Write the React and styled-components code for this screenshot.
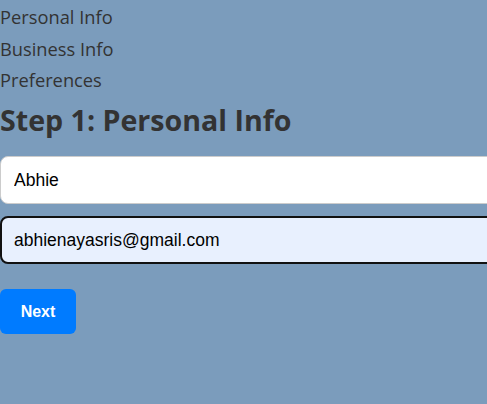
import React from "react";
import styled, { createGlobalStyle } from "styled-components";

const Global = createGlobalStyle`
  html, body { margin: 0; padding: 0; background: #7b9cbc; }
  body { overflow: hidden; }
  * { box-sizing: border-box; }
`;

const Page = styled.div`
  width: 487px;
  height: 404px;
  overflow: hidden;
  background: #7b9cbc;
  font-family: "Open Sans", "Noto Sans", sans-serif;
  color: #333;
`;

const NavList = styled.ul`
  list-style: none;
  margin: 0;
  padding: 0;
`;

const NavItem = styled.li`
  font-size: 18.3px;
  line-height: 31.7px;
  height: 31.7px;
  padding-top: 1px;
`;

const Heading = styled.h2`
  margin: 4px 0 0;
  font-size: 28.6px;
  font-weight: 700;
  line-height: 42px;
  padding-bottom: 2px;
`;

const Form = styled.form`
  display: flex;
  flex-direction: column;
  gap: 12px;
  margin-top: 13px;
  width: 540px;
`;

const Input = styled.input`
  width: 100%;
  height: 48px;
  padding: 0 13px;
  font-family: "Liberation Sans", Arial, sans-serif;
  font-size: 17.5px;
  color: #000;
  border-radius: 8px;
  border: ${(p) => (p.$focused ? "2px solid #111" : "1px solid #ccc")};
  background: ${(p) => (p.$focused ? "#e8f0fe" : "#fff")};
  outline: none;
  padding-left: ${(p) => (p.$focused ? "12px" : "13px")};
`;

const Button = styled.button`
  margin-top: 13px;
  align-self: flex-start;
  width: 76px;
  height: 45px;
  border: none;
  border-radius: 6px;
  background: #007bff;
  color: #fff;
  font-family: "Liberation Sans", Arial, sans-serif;
  font-size: 16px;
  font-weight: 700;
  cursor: pointer;
`;

export default function App() {
  return (
    <Page>
      <Global />
      <NavList>
        <NavItem>Personal Info</NavItem>
        <NavItem>Business Info</NavItem>
        <NavItem>Preferences</NavItem>
      </NavList>
      <Heading>Step 1: Personal Info</Heading>
      <Form onSubmit={(e) => e.preventDefault()}>
        <Input defaultValue="Abhie" />
        <Input $focused defaultValue="abhienayasris@gmail.com" />
        <Button type="submit">Next</Button>
      </Form>
    </Page>
  );
}
